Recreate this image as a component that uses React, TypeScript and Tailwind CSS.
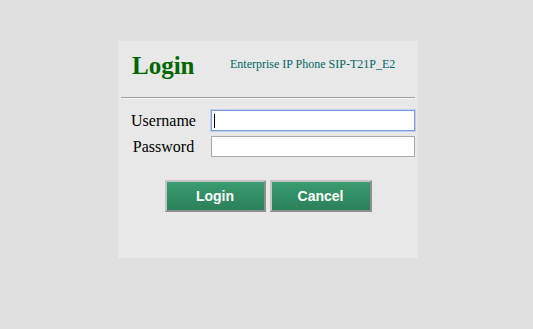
export default function App() {
  return (
    <div className="min-h-[329px] w-full bg-[#e0e0e0] pt-[41px]">
      <div className="ml-[118px] h-[217px] w-[300px] bg-[#e8e8e8] pt-[4px] font-['Liberation_Serif',serif]">
        {/* header */}
        <div className="flex h-[40px] items-center">
          <div className="ml-[14px] w-[63px] text-[25px] font-bold leading-none text-[#006600]">Login</div>
          <div className="ml-[35px] mb-[2px] text-[12px] leading-none text-[#006666]">
            Enterprise IP Phone SIP-T21P_E2
          </div>
        </div>

        <div className="mx-[3px] mt-[12px] h-[2px] border-t border-t-[#a0a0a0] border-b border-b-[#f4f4f4]" />

        {/* form */}
        <div className="mt-[11px] flex flex-col gap-[5px] pl-[3px]">
          <div className="flex h-[21px] items-center">
            <label className="w-[85px] text-center text-[16px] leading-none text-black">Username</label>
            <div className="relative ml-[5px] h-[21px] w-[204px] border border-[#7b9ee0] bg-white shadow-[0_0_0_1px_rgba(123,158,224,0.35)]">
              <span className="absolute left-[2px] top-[3px] h-[14px] w-px bg-black" />
            </div>
          </div>
          <div className="flex h-[21px] items-center">
            <label className="w-[85px] text-center text-[16px] leading-none text-black">Password</label>
            <div className="ml-[5px] h-[21px] w-[204px] border border-[#a9a9a9] bg-white" />
          </div>
        </div>

        {/* buttons */}
        <div className="mt-[23px] flex justify-center gap-[4px] font-['Liberation_Sans',sans-serif]">
          <button className="h-[32px] w-[101px] border-2 border-t-[#c4c4c4] border-l-[#c4c4c4] border-r-[#8e8e8e] border-b-[#8e8e8e] bg-[linear-gradient(#3a9c70,#2a8059)] text-[14px] font-semibold text-white">
            Login
          </button>
          <button className="h-[32px] w-[102px] border-2 border-t-[#c4c4c4] border-l-[#c4c4c4] border-r-[#8e8e8e] border-b-[#8e8e8e] bg-[linear-gradient(#3a9c70,#2a8059)] text-[14px] font-semibold text-white">
            Cancel
          </button>
        </div>
      </div>
    </div>
  );
}
